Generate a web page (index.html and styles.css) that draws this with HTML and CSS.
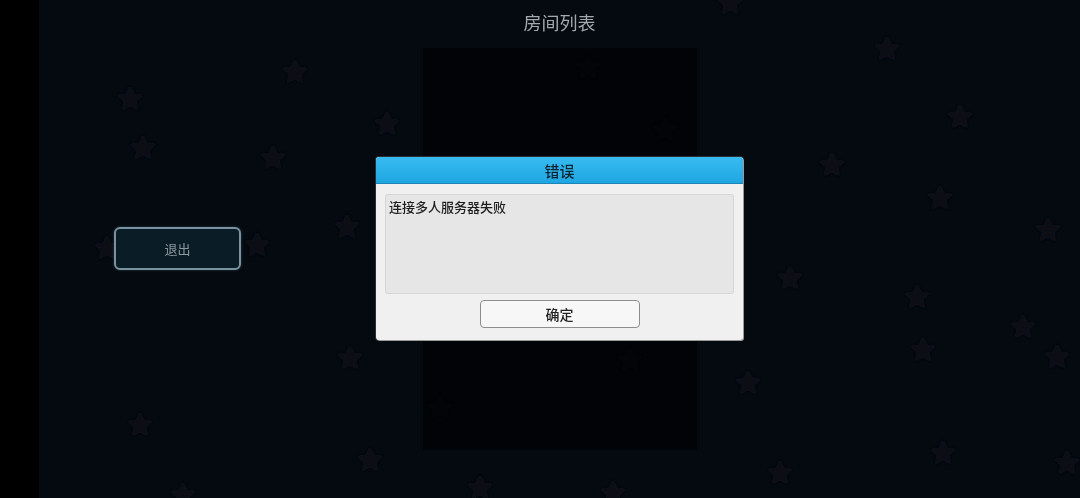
FILE: index.html
```html
<!DOCTYPE html>
<html lang="zh-CN">

<head>
    <meta charset="UTF-8">
    <meta name="viewport" content="width=device-width, initial-scale=1.0">
    <title>房间列表</title>
    <link rel="stylesheet" href="styles.css">
</head>

<body>
    <div class="screen">
        <div class="edge"></div>
        <div class="stage">
            <!-- starfield behind the lobby -->
            <svg class="stars" width="1041" height="498" viewBox="39 0 1041 498">
                <defs>
                    <filter id="soft"><feGaussianBlur stdDeviation="1.2" /></filter>
                    <path id="star" d="M0,-11 L3.3,-4 L10.6,-3.3 L5.1,1.8 L6.6,9.5 L0,5.7 L-6.6,9.5 L-5.1,1.8 L-10.6,-3.3 L-3.3,-4 Z" />
                </defs>
                <g fill="#0a1118" filter="url(#soft)" stroke="#0a1118" stroke-width="3" stroke-linejoin="round">
                    <use href="#star" x="130" y="99" />
                    <use href="#star" x="143" y="148" />
                    <use href="#star" x="273" y="158" />
                    <use href="#star" x="295" y="72" />
                    <use href="#star" x="387" y="124" />
                    <use href="#star" x="347" y="227" />
                    <use href="#star" x="257" y="245" />
                    <use href="#star" x="107" y="248" />
                    <use href="#star" x="350" y="358" />
                    <use href="#star" x="140" y="425" />
                    <use href="#star" x="370" y="460" />
                    <use href="#star" x="183" y="495" />
                    <use href="#star" x="730" y="3" />
                    <use href="#star" x="887" y="49" />
                    <use href="#star" x="960" y="117" />
                    <use href="#star" x="832" y="165" />
                    <use href="#star" x="940" y="198" />
                    <use href="#star" x="1048" y="230" />
                    <use href="#star" x="790" y="278" />
                    <use href="#star" x="917" y="297" />
                    <use href="#star" x="1023" y="327" />
                    <use href="#star" x="923" y="350" />
                    <use href="#star" x="1057" y="357" />
                    <use href="#star" x="748" y="383" />
                    <use href="#star" x="943" y="453" />
                    <use href="#star" x="780" y="473" />
                    <use href="#star" x="1067" y="463" />
                    <use href="#star" x="588" y="67" />
                    <use href="#star" x="665" y="130" />
                    <use href="#star" x="630" y="360" />
                    <use href="#star" x="440" y="408" />
                    <use href="#star" x="480" y="488" />
                    <use href="#star" x="613" y="493" />
                </g>
            </svg>

            <div class="left">
                <button class="exit-btn">退出</button>
            </div>
            <div class="center">
                <h1 class="title">房间列表</h1>
                <div class="room-list"></div>
            </div>
            <div class="right"></div>

            <div class="modal">
                <div class="dialog">
                    <div class="dialog-head">错误</div>
                    <div class="dialog-body">
                        <div class="message">连接多人服务器失败</div>
                        <button class="ok-btn">确定</button>
                    </div>
                </div>
            </div>
        </div>
    </div>
</body>

</html>
```

FILE: styles.css
```css
* {
    margin: 0;
    padding: 0;
    box-sizing: border-box;
    font-family: "Noto Sans CJK SC", "Noto Sans", sans-serif;
}

html,
body {
    width: 100%;
    height: 100%;
    overflow: hidden;
    background-color: #000;
}

.screen {
    display: flex;
    width: 1080px;
    height: 498px;
}

.edge {
    width: 39px;
    background-color: #000;
}

.stage {
    position: relative;
    flex: 1;
    display: grid;
    grid-template-columns: 1fr 274px 1fr;
    background-color: #040a10;
}

.stars {
    position: absolute;
    top: 0;
    left: 0;
}

.left {
    position: relative;
    display: flex;
    align-items: center;
    padding-left: 75px;
}

.exit-btn {
    width: 127px;
    height: 43px;
    margin-top: -2px;
    border: 2px solid #7a929f;
    border-radius: 6px;
    background-color: #0a1d27;
    color: #8d989f;
    font-size: 13px;
    box-shadow: 0 0 3px rgba(120, 150, 165, 0.35);
}

.center {
    position: relative;
    display: flex;
    flex-direction: column;
}

.title {
    height: 48px;
    padding-top: 9px;
    text-align: center;
    font-size: 18px;
    font-weight: normal;
    line-height: 26px;
    color: #a3a8ad;
}

.room-list {
    height: 402px;
    background-color: rgba(0, 2, 4, 0.75);
}

.modal {
    position: absolute;
    inset: 0;
    display: flex;
    justify-content: center;
    align-items: center;
}

.dialog {
    width: 367px;
    height: 183px;
    margin-top: -1px;
    display: flex;
    flex-direction: column;
    border-radius: 3px;
    background-color: #f0f0f0;
    box-shadow: 1px 1px 0 #9a9a9a, 0 0 0 1px #2b2f33;
    overflow: hidden;
}

.dialog-head {
    height: 27px;
    text-align: center;
    font-size: 15px;
    font-weight: 500;
    line-height: 27px;
    color: #102532;
    background: linear-gradient(#38bbf0, #1fa6e2);
    border-bottom: 1px solid #1a86b8;
}

.dialog-body {
    flex: 1;
    display: flex;
    flex-direction: column;
    align-items: center;
    padding: 10px 9px 11px 9px;
}

.message {
    align-self: stretch;
    height: 100px;
    padding: 3px 3px;
    border: 1px solid #d5d5d5;
    border-radius: 3px;
    background-color: #e6e6e6;
    color: #1e1e1e;
    font-size: 13px;
    font-weight: 500;
    line-height: 18px;
}

.ok-btn {
    width: 160px;
    height: 28px;
    margin-top: 6px;
    border: 1px solid #8e8e8e;
    border-radius: 4px;
    background-color: #f7f7f7;
    color: #222;
    font-size: 14px;
    font-weight: 500;
}
```
